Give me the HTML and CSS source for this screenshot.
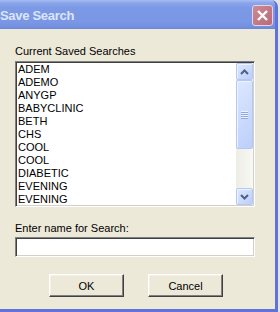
FILE: index.html
```html
<!DOCTYPE html>
<html lang="en">
<head>
<meta charset="UTF-8">
<title>Save Search</title>
<link rel="stylesheet" href="styles.css">
</head>
<body>
<div class="window">
<div class="titlebar">
<span class="title">Save Search</span>
<div class="close">
<svg width="21" height="21" viewBox="0 0 21 21"><path d="M6 6 L15 15 M15 6 L6 15" stroke="#fff" stroke-width="2.4" fill="none"/></svg>
</div>
</div>
<div class="body">
<div class="label">Current Saved Searches</div>
<div class="listbox">
<ul class="items">
<li>ADEM</li>
<li>ADEMO</li>
<li>ANYGP</li>
<li>BABYCLINIC</li>
<li>BETH</li>
<li>CHS</li>
<li>COOL</li>
<li>COOL</li>
<li>DIABETIC</li>
<li>EVENING</li>
<li>EVENING</li>
</ul>
<div class="scrollbar">
<div class="sb-btn">
<svg width="9" height="6" viewBox="0 0 9 6"><polyline points="1,5 4.5,1.5 8,5" stroke="#4d6185" stroke-width="2" fill="none"/></svg>
</div>
<div class="sb-thumb"><span class="grip"></span></div>
<div class="sb-track"></div>
<div class="sb-btn">
<svg width="9" height="6" viewBox="0 0 9 6"><polyline points="1,1 4.5,4.5 8,1" stroke="#4d6185" stroke-width="2" fill="none"/></svg>
</div>
</div>
</div>
<div class="label label-name">Enter name for Search:</div>
<div class="textbox"></div>
<div class="buttons">
<button class="btn">OK</button>
<button class="btn">Cancel</button>
</div>
</div>
</div>
</body>
</html>
```

FILE: styles.css
```css
* {
margin: 0;
padding: 0;
box-sizing: border-box;
}
body {
background-color: #e4e4e4;
font-family: "Liberation Sans", Arial, sans-serif;
font-size: 11px;
color: #000;
}
.window {
width: 278px;
height: 312px;
border-right: 3px solid #5f73da;
border-bottom: 3px solid #5f73da;
border-top-right-radius: 7px;
display: flex;
flex-direction: column;
background-color: #ece9d8;
}
.titlebar {
height: 29px;
display: flex;
align-items: center;
justify-content: space-between;
background: linear-gradient(#a9bdf3 0px, #8aa5ea 3px, #7c99e6 8px, #7a96e4 22px, #7390e0 27px, #6a84d6 29px);
border-top-right-radius: 5px;
padding-right: 2px;
}
.title {
color: #dce5f8;
font-weight: bold;
font-size: 13px;
letter-spacing: -0.3px;
margin-top: 2px;
}
.close {
width: 21px;
height: 21px;
margin-top: 1px;
border: 1px solid #e6d6e4;
border-radius: 3px;
background: linear-gradient(135deg, #cc8a95, #b86b78);
display: flex;
}
.close svg {
margin: -1px;
}
.body {
flex: 1;
padding: 16px 20px 0 15px;
display: flex;
flex-direction: column;
}
.label {
height: 13px;
line-height: 13px;
}
.listbox {
margin-top: 3px;
height: 146px;
background-color: #fff;
border: 1px solid;
border-color: #808080 #fff #fff #808080;
box-shadow: inset 1px 1px #404040, inset -1px -1px #d4d0c8;
padding: 1px;
display: flex;
}
.items {
list-style: none;
flex: 1;
overflow: hidden;
padding-left: 1px;
}
.items li {
height: 13px;
line-height: 13px;
white-space: nowrap;
}
.scrollbar {
width: 17px;
display: flex;
flex-direction: column;
background: linear-gradient(90deg, #eeede5, #f8f8f4);
}
.sb-btn,
.sb-thumb {
border: 1px solid #b4c8f6;
border-radius: 2px;
background: linear-gradient(135deg, #dde7fe, #bccffb);
box-shadow: inset 1px 1px #eef3ff;
}
.sb-btn {
height: 17px;
display: flex;
align-items: center;
justify-content: center;
}
.sb-thumb {
height: 69px;
display: flex;
align-items: center;
justify-content: center;
}
.grip {
width: 7px;
height: 8px;
background: repeating-linear-gradient(#eef3ff 0px, #eef3ff 1px, #8ea7e6 1px, #8ea7e6 2px);
}
.sb-track {
flex: 1;
}
.label-name {
margin-top: 15px;
}
.textbox {
margin-top: 2px;
height: 20px;
background-color: #fff;
border: 1px solid;
border-color: #808080 #fff #fff #808080;
box-shadow: inset 1px 1px #404040, inset -1px -1px #d4d0c8;
}
.buttons {
margin-top: 17px;
padding-left: 34px;
display: flex;
gap: 24px;
}
.btn {
width: 75px;
height: 23px;
font-family: "Liberation Sans", Arial, sans-serif;
font-size: 11px;
color: #000;
background-color: #ece9d8;
border: 1px solid;
border-color: #fff #404040 #404040 #fff;
box-shadow: inset -1px -1px #808080, inset 1px 1px #f4f2e8;
}
```
